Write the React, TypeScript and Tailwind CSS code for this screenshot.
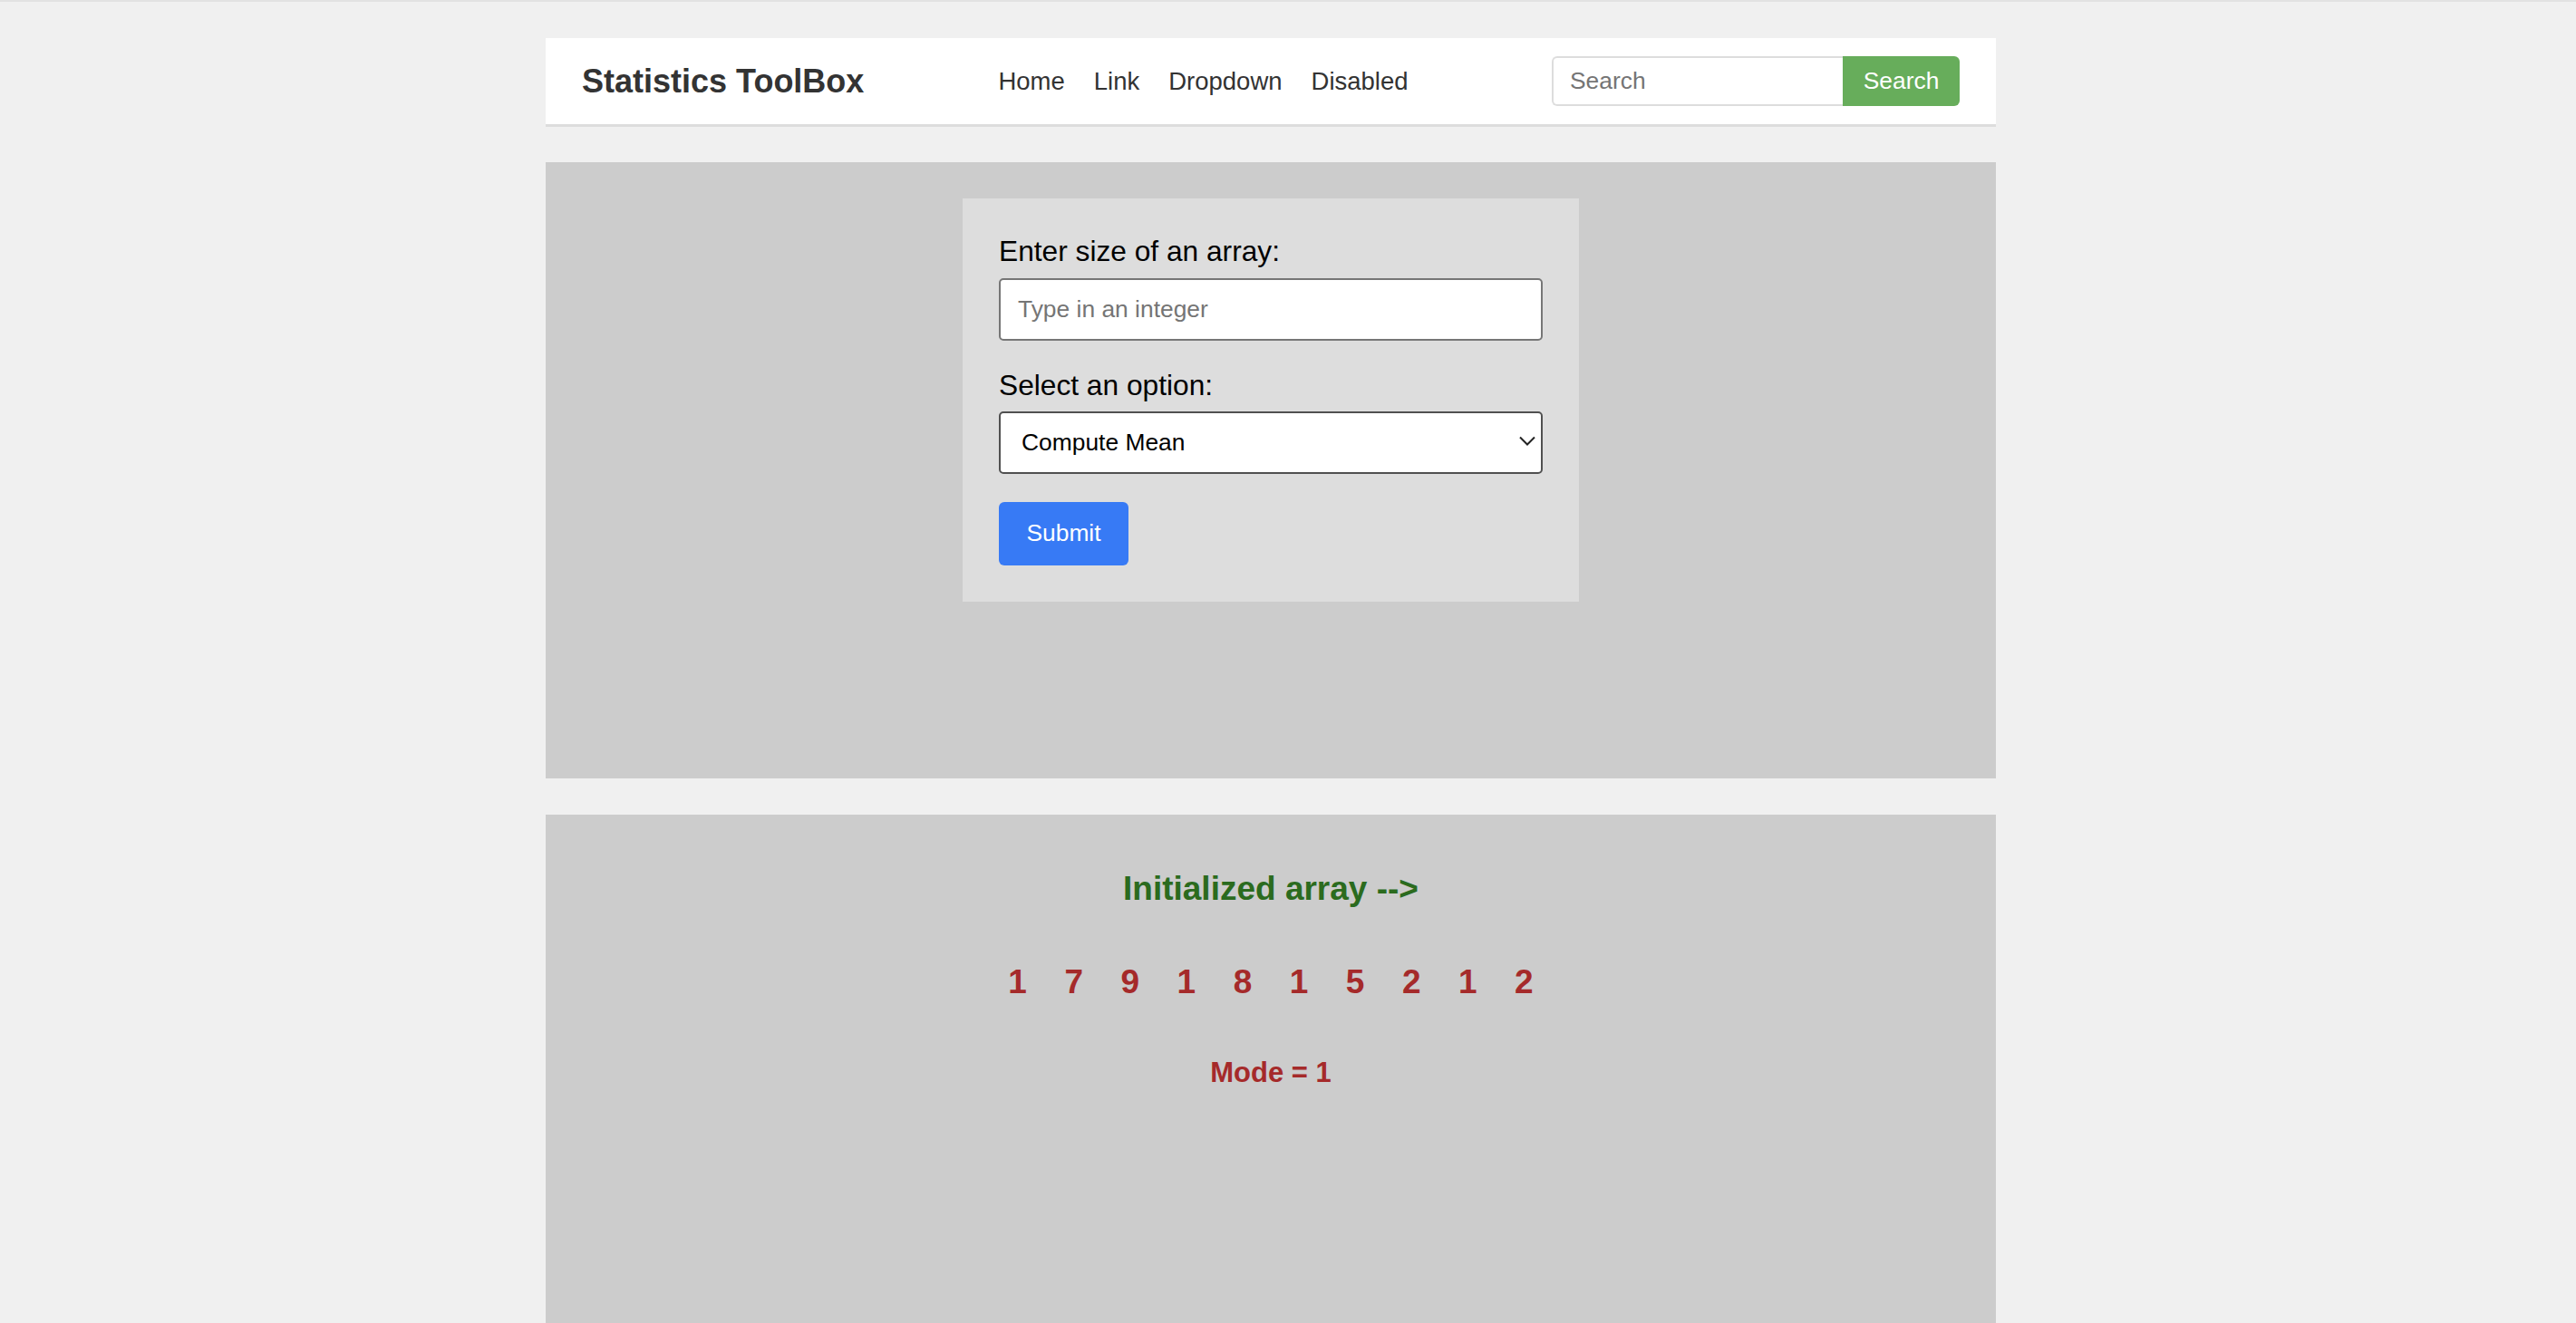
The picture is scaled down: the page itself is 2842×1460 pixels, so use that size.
const numbers = [1, 7, 9, 1, 8, 1, 5, 2, 1, 2];

function Navbar() {
    return (
        <nav className="h-[98px] bg-white border-b-[3px] border-[#dddddd] flex items-center pl-10 pr-10">
            <h1 className="text-[36px] leading-[41px] font-bold text-[#333333]">Statistics ToolBox</h1>
            <ul className="ml-[148px] flex items-center gap-[32px] text-[27.5px] leading-[32px] text-[#333333]">
                <li>Home</li>
                <li>Link</li>
                <li>Dropdown</li>
                <li>Disabled</li>
            </ul>
            <div className="ml-auto flex items-center">
                <input
                    type="text"
                    placeholder="Search"
                    className="w-[321px] h-[55px] border-2 border-r-0 border-[#dddddd] rounded-l-[6px] pl-[18px] text-[26.4px] bg-white outline-none placeholder:text-[#757575]"
                />
                <button className="w-[129px] h-[55px] bg-[#67ad5b] rounded-r-[6px] text-white text-[26.4px]">
                    Search
                </button>
            </div>
        </nav>
    );
}

function ArrayForm() {
    return (
        <div className="w-[680px] mx-auto bg-[#dddddd] p-10">
            <label className="block text-[31.7px] leading-[36.5px] text-black mb-[11px]">Enter size of an array:</label>
            <input
                type="text"
                placeholder="Type in an integer"
                className="block w-full h-[69px] border-2 border-[#767676] rounded-[5px] bg-white px-[19px] text-[26.4px] outline-none placeholder:text-[#757575]"
            />

            <label className="block mt-[31px] text-[31.7px] leading-[36.5px] text-black mb-[11px]">Select an option:</label>
            <div className="relative">
                <select className="block w-full h-[69px] appearance-none border-2 border-[#505050] rounded-[5px] bg-white px-[23px] text-[26.4px] text-black outline-none">
                    <option>Compute Mean</option>
                    <option>Compute Median</option>
                    <option>Compute Mode</option>
                </select>
                {/* chevron */}
                <svg
                    className="absolute right-[8px] top-[27px] w-[18px] h-[11px] pointer-events-none"
                    viewBox="0 0 18 11"
                    fill="none"
                    stroke="#222222"
                    strokeWidth="2"
                >
                    <path d="M1 1.5l8 8 8-8" />
                </svg>
            </div>

            <button className="mt-[31px] w-[143px] h-[70px] rounded-[6px] bg-[#377af5] text-white text-[26.4px]">
                Submit
            </button>
        </div>
    );
}

function Results() {
    return (
        <div className="text-center">
            <h2 className="text-[37px] leading-[42.5px] font-bold text-[#2b6b1e]">Initialized array --&gt;</h2>
            <div className="mt-[60px] flex justify-center gap-[41.5px] text-[37px] leading-[42.5px] font-bold text-[#a52a2a]">
                {numbers.map((n, i) => (
                    <span key={i}>{n}</span>
                ))}
            </div>
            <p className="mt-[61px] text-[31px] leading-[35.6px] font-bold text-[#a52a2a]">Mode = 1</p>
        </div>
    );
}

export default function App() {
    return (
        <div className="h-[1460px] overflow-hidden bg-[#f0f0f0] border-t-2 border-[#e2e2e2] pt-10 font-['Liberation_Sans',Arial,sans-serif]">
            <div className="w-[1600px] ml-[602px]">
                <Navbar />

                <section className="mt-[39px] h-[680px] bg-[#cccccc] pt-10">
                    <ArrayForm />
                </section>

                <section className="mt-10 h-[680px] bg-[#cccccc] pt-[61px]">
                    <Results />
                </section>
            </div>
        </div>
    );
}
